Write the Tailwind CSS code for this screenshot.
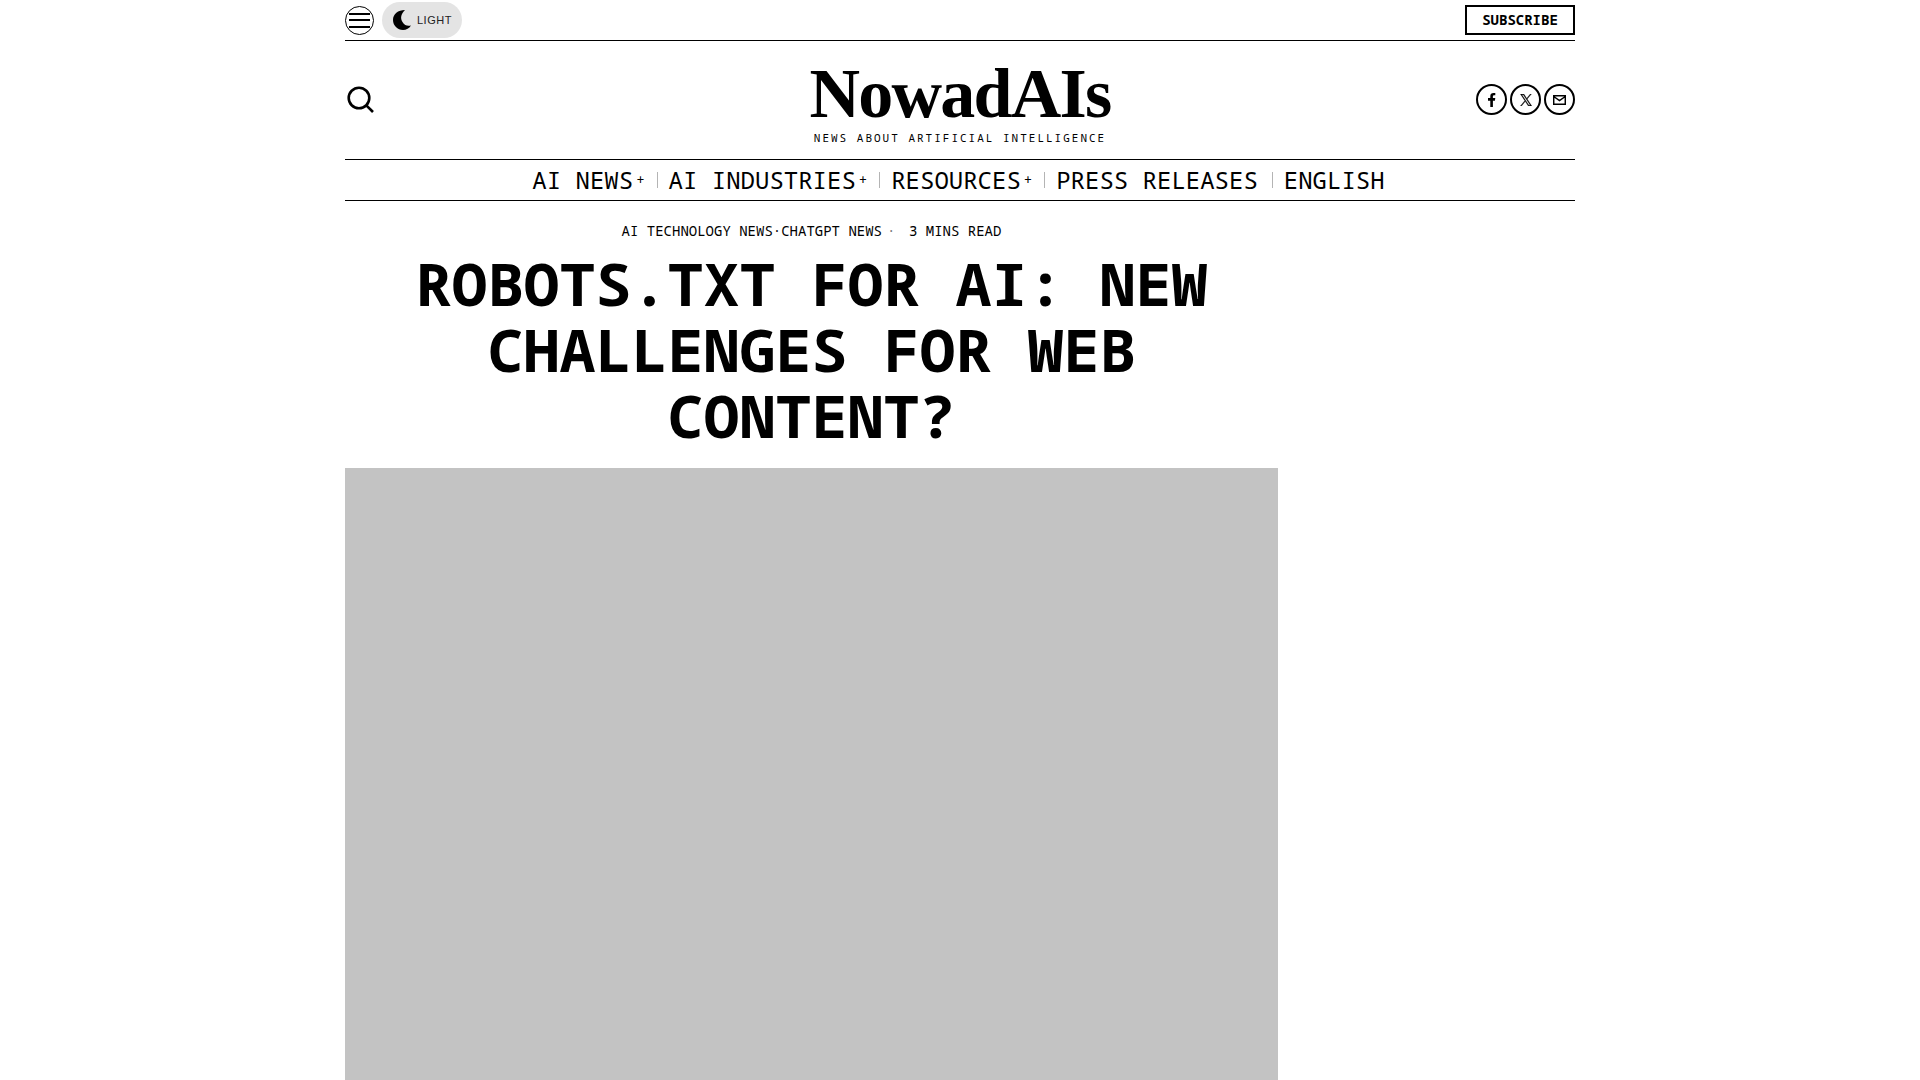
<!DOCTYPE html>
<html lang="en">
<head>
<meta charset="utf-8">
<meta name="viewport" content="width=device-width, initial-scale=1">
<title>Robots.txt for AI: New Challenges for Web Content? - NowadAIs</title>
<script src="https://cdn.jsdelivr.net/npm/@tailwindcss/browser@4"></script>
</head>
<body class="bg-white text-black font-['Noto_Sans_Mono','DejaVu_Sans_Mono',monospace]">
<div class="mx-auto max-w-[1230px]">
  <header>
    <div class="flex h-[41px] items-center justify-between border-b border-black">
      <div class="flex items-center gap-2">
        <button type="button" aria-label="Open menu">
          <svg class="block size-[29px]" viewBox="0 0 29 29" fill="none" stroke="#000"><circle cx="14.500" cy="14.500" r="14"/><path d="M4 8h21M4 14h21M4 21h21" stroke-width="2"/></svg>
        </button>
        <button type="button" class="flex h-9 w-20 items-center gap-1.5 rounded-full bg-[#e4e4e4] pl-[11px] font-['Liberation_Sans',sans-serif] text-[11px] tracking-[0.5px] text-[#222]">
          <svg class="h-5 w-[18px]" viewBox="0 0 18 20" fill="#000"><path d="M12 0C8 4 7 8 9.500 12c2 3.500 5 4.300 8.500 3.500C16.300 18.400 13.300 20 10 20 4.500 20 0 15.500 0 10 0 4 5 0 12 0z"/></svg>
          LIGHT
        </button>
      </div>
      <a href="#" class="flex h-[30px] w-[110px] items-center justify-center border-2 border-black text-sm font-bold">SUBSCRIBE</a>
    </div>

    <div class="grid h-[118px] grid-cols-[1fr_auto_1fr] items-center">
      <button type="button" aria-label="Search" class="justify-self-start pl-[2px]">
        <svg class="block size-7" viewBox="0 0 28 28" fill="none" stroke="#000" stroke-width="2.600"><circle cx="12" cy="12" r="10.300"/><path d="M19.300 19.300L26 26"/></svg>
      </button>
      <div class="flex flex-col items-center gap-px pt-1">
        <a href="#" class="font-['Liberation_Serif',serif] text-[70px] leading-[70px] font-bold tracking-tight">NowadAIs</a>
        <p class="text-[11px] leading-4 tracking-[2px]">NEWS ABOUT ARTIFICIAL INTELLIGENCE</p>
      </div>
      <div class="flex gap-[3px] justify-self-end pb-px">
        <a href="#" aria-label="Facebook" class="flex size-[31px] items-center justify-center rounded-full border-2 border-black">
          <svg class="h-[14px] w-2" viewBox="0 0 8 14"><path d="M2.300 14V7.700H0V5h2.300V3.200C2.300 1.100 3.500 0 5.500 0c.9 0 1.800.1 1.800.1v2.200H6.200c-1 0-1.300.6-1.300 1.200V5h2.400l-.4 2.700H4.900V14z"/></svg>
        </a>
        <a href="#" aria-label="X" class="flex size-[31px] items-center justify-center rounded-full border-2 border-black">
          <svg class="size-3" viewBox="0 0 24 24" stroke="#000" stroke-width=".8"><path d="M14.300 10.200L22.700 0h-2l-7.300 8.800L7.600 0H.9l8.800 13.300L.9 24h2l7.700-9.300L16.700 24h6.700zM3.600 1.600h3.100l14 20.900h-3.100z" fill-rule="evenodd"/></svg>
        </a>
        <a href="#" aria-label="Email" class="flex size-[31px] items-center justify-center rounded-full border-2 border-black">
          <svg class="h-[10px] w-[13px]" viewBox="0 0 13 10" fill="none" stroke="#000" stroke-width="1.500"><path d="M.7.700h11.600v8.600H.7zM.7 1.500L6.500 5.500l5.800-4"/></svg>
        </a>
      </div>
    </div>

    <nav aria-label="Main" class="border-y border-black">
      <ul class="flex h-10 items-center justify-center text-2xl">
        <li class="pr-3 pl-[11px]"><a href="#" class="flex items-center gap-[3px]">AI NEWS<span class="text-sm">+</span></a></li>
        <li aria-hidden="true" class="h-4 w-px bg-[#b4b4b4]"></li>
        <li class="pr-3 pl-[11px]"><a href="#" class="flex items-center gap-[3px]">AI INDUSTRIES<span class="text-sm">+</span></a></li>
        <li aria-hidden="true" class="h-4 w-px bg-[#b4b4b4]"></li>
        <li class="pr-3 pl-[11px]"><a href="#" class="flex items-center gap-[3px]">RESOURCES<span class="text-sm">+</span></a></li>
        <li aria-hidden="true" class="h-4 w-px bg-[#b4b4b4]"></li>
        <li class="pr-[14px] pl-[11px]"><a href="#">PRESS RELEASES</a></li>
        <li aria-hidden="true" class="h-4 w-px bg-[#b4b4b4]"></li>
        <li class="pr-[14px] pl-[11px]"><a href="#">ENGLISH</a></li>
      </ul>
    </nav>
  </header>

  <main class="w-full max-w-[933px]">
    <div class="flex justify-center pt-5 text-sm">
      <a href="#">AI TECHNOLOGY NEWS</a><span>·</span><a href="#">CHATGPT NEWS</a><span class="w-[27px] pl-[5px] text-[#777]">·</span><span>3 MINS READ</span>
    </div>
    <h1 class="px-10 pt-[9px] text-center text-[60px] leading-[66px] font-bold">ROBOTS.TXT FOR AI: NEW CHALLENGES FOR WEB CONTENT?</h1>
    <div class="mt-5 h-[612px] bg-[#c3c3c3]"></div>
  </main>
</div>
</body>
</html>
